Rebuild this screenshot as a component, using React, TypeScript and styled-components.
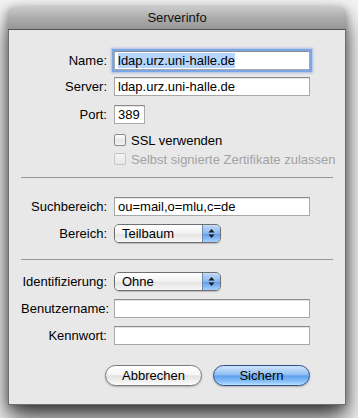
import * as React from "react";
import styled, {createGlobalStyle} from 'styled-components'

const GlobalStyle = createGlobalStyle`
  html, body {
    margin: 0;
    padding: 0;
    background: #f3f3f3;
    font-family: "Liberation Sans", Arial, sans-serif;
    font-size: 13px;
    color: #000;
  }
`

const Page = styled('div')`
  width: 358px;
  height: 418px;
  padding: 7px 0 0 8px;
  box-sizing: border-box;
  overflow: hidden;
`
const Window = styled('div')`
  width: 338px;
  border-radius: 5px 5px 0 0;
  box-shadow: 0 14px 24px rgba(0, 0, 0, 0.7), 0 2px 10px rgba(0, 0, 0, 0.35);
  background: #e8e8e8;
`
const TitleBar = styled('div')`
  height: 22px;
  line-height: 22px;
  text-align: center;
  border-radius: 5px 5px 0 0;
  background: linear-gradient(#cacaca, #a9a9a9 55%, #979797);
  border-bottom: 1px solid #515151;
  color: #111;
  font-size: 13px;
`
const Content = styled('div')`
  border: 1px solid #6e6e6e;
  border-top: 0;
  padding: 21px 12px 18px;
`
const Row = styled('div')<{ $top?: number }>`
  display: flex;
  align-items: center;
  margin-top: ${p => p.$top ?? 0}px;
`
const Label = styled('div')`
  width: 86px;
  margin-right: 7px;
  text-align: right;
  white-space: nowrap;
`
const Field = styled('div')<{ $width?: number, $focus?: boolean }>`
  width: ${p => p.$width ?? 196}px;
  height: 19px;
  box-sizing: border-box;
  background: #fff;
  border: 1px solid #a8a8a8;
  border-top-color: #8c8c8c;
  box-shadow: ${p => p.$focus ? '0 0 0 2px #7aa6e6, 0 0 2px 3px rgba(90, 140, 220, 0.45)' : 'inset 0 1px 0 #e4e4e4'};
  padding: 0 3px;
  line-height: 17px;
  white-space: nowrap;
  overflow: hidden;
`
const Selected = styled('span')`
  background: #b5d5fe;
`
const CheckRow = styled('div')<{ $top?: number, $disabled?: boolean }>`
  display: flex;
  align-items: center;
  height: 14px;
  white-space: nowrap;
  margin-top: ${p => p.$top ?? 0}px;
  margin-left: 93px;
  color: ${p => p.$disabled ? '#a2a2a2' : '#000'};
`
const Box = styled('span')<{ $disabled?: boolean }>`
  flex: none;
  width: 12px;
  height: 12px;
  box-sizing: border-box;
  border-radius: 2px;
  margin-right: 5px;
  border: 1px solid ${p => p.$disabled ? '#c6c6c6' : '#8a8a8a'};
  background: ${p => p.$disabled ? 'linear-gradient(#f4f4f4, #e8e8e8)' : 'linear-gradient(#ffffff, #e6e6e6 60%, #f4f4f4)'};
`
const Separator = styled('div')<{ $top: number }>`
  height: 0;
  border-top: 1px solid #979797;
  margin-top: ${p => p.$top}px;
`
const Popup = styled('div')`
  width: 107px;
  height: 19px;
  box-sizing: border-box;
  display: flex;
  border: 1px solid #6f6f6f;
  border-radius: 5px;
  overflow: hidden;
  box-shadow: 0 1px 1px rgba(0, 0, 0, 0.2);
`
const PopupText = styled('div')`
  flex: 1;
  padding-left: 7px;
  line-height: 17px;
  background: linear-gradient(#ffffff, #f2f2f2 50%, #e3e3e3 51%, #f6f6f6);
`
const PopupArrows = styled('div')`
  width: 17px;
  border-left: 1px solid #6a86b6;
  display: flex;
  align-items: center;
  justify-content: center;
  background: linear-gradient(#c4daf6, #8ab6ef 50%, #5c99ea 51%, #a8d0fb);
`
const ButtonRow = styled('div')`
  display: flex;
  justify-content: flex-end;
  gap: 11px;
  margin-top: 20px;
  padding-right: 23px;
`
const Button = styled('div')<{ $primary?: boolean }>`
  width: 97px;
  height: 21px;
  box-sizing: border-box;
  border-radius: 11px;
  text-align: center;
  line-height: 19px;
  border: 1px solid ${p => p.$primary ? '#2f4f8c' : '#7a7a7a'};
  background: ${p => p.$primary
    ? 'linear-gradient(#cfe3fb, #92c0f3 45%, #5fa0ec 52%, #8ec6fb 85%, #bde4ff)'
    : 'linear-gradient(#ffffff, #f6f6f6 45%, #e2e2e2 52%, #f4f4f4 85%, #ffffff)'};
  box-shadow: 0 1px 2px rgba(0, 0, 0, 0.25);
`

const Arrows = () => <svg width="7" height="11" viewBox="0 0 7 11">
    <path d="M3.5 1 L6.5 4.5 L0.5 4.5 Z" fill="#1a1a1a"/>
    <path d="M3.5 10 L6.5 6.5 L0.5 6.5 Z" fill="#1a1a1a"/>
</svg>

const Select: React.FC<{ value: string }> = ({value}) => <Popup>
    <PopupText>{value}</PopupText>
    <PopupArrows><Arrows/></PopupArrows>
</Popup>

const App = () => {
    return <Page>
        <GlobalStyle/>
        <Window>
            <TitleBar>Serverinfo</TitleBar>
            <Content>
                <Row>
                    <Label>Name:</Label>
                    <Field $focus><Selected>ldap.urz.uni-halle.de</Selected></Field>
                </Row>
                <Row $top={7}>
                    <Label>Server:</Label>
                    <Field>ldap.urz.uni-halle.de</Field>
                </Row>
                <Row $top={9}>
                    <Label>Port:</Label>
                    <Field $width={31}>389</Field>
                </Row>
                <CheckRow $top={9}>
                    <Box/>SSL verwenden
                </CheckRow>
                <CheckRow $top={5} $disabled>
                    <Box $disabled/>Selbst signierte Zertifikate zulassen
                </CheckRow>
                <Separator $top={11}/>
                <Row $top={19}>
                    <Label>Suchbereich:</Label>
                    <Field>ou=mail,o=mlu,c=de</Field>
                </Row>
                <Row $top={8}>
                    <Label>Bereich:</Label>
                    <Select value="Teilbaum"/>
                </Row>
                <Separator $top={16}/>
                <Row $top={12}>
                    <Label>Identifizierung:</Label>
                    <Select value="Ohne"/>
                </Row>
                <Row $top={8}>
                    <Label>Benutzername:</Label>
                    <Field/>
                </Row>
                <Row $top={8}>
                    <Label>Kennwort:</Label>
                    <Field/>
                </Row>
                <ButtonRow>
                    <Button>Abbrechen</Button>
                    <Button $primary>Sichern</Button>
                </ButtonRow>
            </Content>
        </Window>
    </Page>
};

export default App;
